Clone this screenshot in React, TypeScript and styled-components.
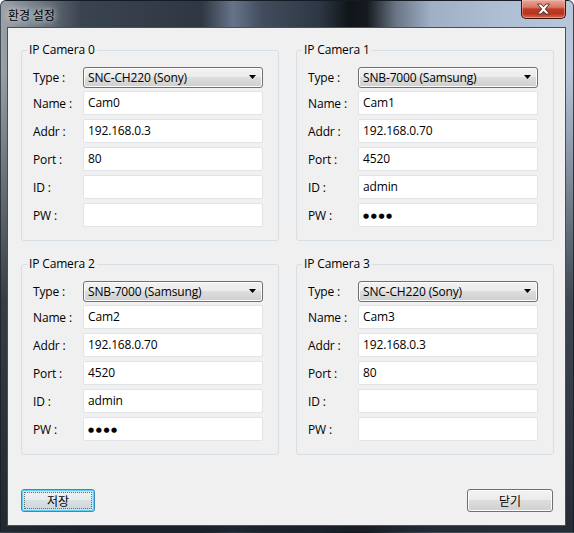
import React from 'react';
import styled, { createGlobalStyle, css } from 'styled-components';

const GlobalStyle = createGlobalStyle`
    html, body {
        margin: 0;
        padding: 0;
        background: #ffffff;
    }
    body {
        font-family: "Segoe UI", "Open Sans", "Noto Sans CJK KR", sans-serif;
        font-size: 12px;
        color: #000;
    }
`;

const WindowFrame = styled.div`
    box-sizing: border-box;
    width: 574px;
    height: 533px;
    display: flex;
    flex-direction: column;
    padding: 0 7px 6px 6px;
    border-radius: 6px 6px 0 0;
    border: 1px solid rgba(20, 26, 34, 0.7);
    background:
        linear-gradient(180deg, rgba(0, 0, 0, 0) 0px, rgba(0, 0, 0, 0) 70px, rgba(22, 28, 36, 0.75) 300px, rgba(24, 30, 38, 0.92) 533px),
        linear-gradient(90deg, #9aa2aa 0px, #737c86 35px, #3a4450 80px, #2e3742 200px, #66748a 232px, #414c5c 262px, #2e3744 318px, #11151a 348px, #161a20 366px, #6a7585 395px, #9fb0c6 430px, #aebfd4 500px, #b8c7da 574px);
`;

const TitleBar = styled.div`
    height: 26px;
    display: flex;
    justify-content: space-between;
    align-items: flex-start;
`;

const TitleText = styled.span`
    margin-top: 6px;
    margin-left: 1px;
    font-family: "Noto Sans CJK KR", sans-serif;
    font-size: 12px;
    line-height: 16px;
    color: #000;
    text-shadow: 0 0 6px rgba(255, 255, 255, 0.9), 0 0 10px rgba(255, 255, 255, 0.6);
`;

const CloseButton = styled.div`
    box-sizing: border-box;
    width: 45px;
    height: 19px;
    margin-top: -1px;
    display: flex;
    align-items: center;
    justify-content: center;
    border: 1px solid #3b1510;
    border-top: none;
    border-radius: 0 0 5px 5px;
    background: linear-gradient(180deg, #e6a797 0%, #d67a68 40%, #c33b25 50%, #b8321e 75%, #d46a4c 100%);
    box-shadow: inset 0 0 0 1px rgba(255, 200, 190, 0.45);
`;

const Client = styled.div`
    flex: 1;
    display: flex;
    flex-direction: column;
    background: #f0f0f0;
    border: 1px solid #46505c;
    padding: 14px 11px 13px 13px;
    letter-spacing: -0.15px;
`;

const GroupGrid = styled.div`
    display: grid;
    grid-template-columns: 258px 258px;
    column-gap: 17px;
    row-gap: 15px;
`;

const Group = styled.fieldset`
    box-sizing: border-box;
    margin: 0;
    min-width: 0;
    padding: 9px 15px 13px 11px;
    border: 1px solid #d5dfe5;
    border-radius: 3px;
`;

const Legend = styled.legend`
    margin-left: -6px;
    padding: 0 2px;
    font-size: 12px;
    line-height: 16px;
    color: #000;
`;

const Fields = styled.div`
    display: flex;
    flex-direction: column;
    gap: 4px;
`;

const Row = styled.div<{ $h: number }>`
    display: flex;
    align-items: center;
    height: ${p => p.$h}px;
`;

const Label = styled.span`
    width: 50px;
    flex: none;
    font-size: 12px;
    color: #000;
`;

const Combo = styled.div`
    box-sizing: border-box;
    flex: 1;
    height: 21px;
    display: flex;
    align-items: center;
    justify-content: space-between;
    padding: 0 6px 0 4px;
    border: 1px solid #707070;
    border-radius: 3px;
    background: linear-gradient(180deg, #f2f2f2 0%, #ebebeb 50%, #dddddd 50%, #cfcfcf 100%);
    box-shadow: inset 0 0 0 1px #fcfcfc;
    font-size: 12px;
    white-space: nowrap;
`;

const TextBox = styled.div<{ $secret?: boolean }>`
    box-sizing: border-box;
    flex: 1;
    height: 24px;
    padding: 3px 4px 0;
    border: 1px solid #e0e5ea;
    border-radius: 2px;
    background: #ffffff;
    font-size: 12px;
    line-height: 16px;
    white-space: nowrap;
    ${p => p.$secret && css`
        font-family: "DejaVu Sans", sans-serif;
        font-size: 7px;
        letter-spacing: 1.6px;
        padding-top: 4px;
    `}
`;

const Footer = styled.div`
    margin-top: auto;
    display: flex;
    justify-content: space-between;
    padding-right: 1px;
`;

const Button = styled.div<{ $w: number; $default?: boolean }>`
    box-sizing: border-box;
    width: ${p => p.$w}px;
    height: 23px;
    display: flex;
    align-items: center;
    justify-content: center;
    border: 1px solid #707070;
    border-radius: 3px;
    background: linear-gradient(180deg, #f2f2f2 0%, #ebebeb 50%, #dddddd 50%, #cfcfcf 100%);
    box-shadow: inset 0 0 0 1px #fcfcfc;
    font-family: "Noto Sans CJK KR", sans-serif;
    font-size: 12px;
    color: #000;
    ${p => p.$default && css`
        border-color: #2f8ec6;
        box-shadow: inset 0 0 0 1px #5ed0f6, inset 0 0 0 2px #bfe8f8;
        outline: 1px dotted #6a6a6a;
        outline-offset: -4px;
        background: linear-gradient(180deg, #eef2f4 0%, #e6ebee 50%, #d9e0e4 50%, #ccd5da 100%);
    `}
`;

function ComboArrow() {
    return (
        <svg width="7" height="4" viewBox="0 0 7 4">
            <path d="M0 0 H7 L3.5 4 Z" fill="#000" />
        </svg>
    );
}

function CloseGlyph() {
    return (
        <svg width="15" height="12" viewBox="0 0 15 12">
            <path
                d="M1.5 1 H5 L7.5 3.8 L10 1 H13.5 L9.3 6 L13.5 11 H10 L7.5 8.2 L5 11 H1.5 L5.7 6 Z"
                fill="#ffffff"
                stroke="#4a2a26"
                strokeWidth="0.9"
                strokeLinejoin="round"
            />
        </svg>
    );
}

interface Camera {
    type: string;
    name: string;
    addr: string;
    port: string;
    id: string;
    pw: string;
}

const cameras: Camera[] = [
    { type: 'SNC-CH220 (Sony)', name: 'Cam0', addr: '192.168.0.3', port: '80', id: '', pw: '' },
    { type: 'SNB-7000 (Samsung)', name: 'Cam1', addr: '192.168.0.70', port: '4520', id: 'admin', pw: '●●●●' },
    { type: 'SNB-7000 (Samsung)', name: 'Cam2', addr: '192.168.0.70', port: '4520', id: 'admin', pw: '●●●●' },
    { type: 'SNC-CH220 (Sony)', name: 'Cam3', addr: '192.168.0.3', port: '80', id: '', pw: '' },
];

function CameraGroup({ index, cam }: { index: number; cam: Camera }) {
    return (
        <Group>
            <Legend>IP Camera {index}</Legend>
            <Fields>
                <Row $h={20}>
                    <Label>Type :</Label>
                    <Combo>
                        <span>{cam.type}</span>
                        <ComboArrow />
                    </Combo>
                </Row>
                <Row $h={24}>
                    <Label>Name :</Label>
                    <TextBox>{cam.name}</TextBox>
                </Row>
                <Row $h={24}>
                    <Label>Addr :</Label>
                    <TextBox>{cam.addr}</TextBox>
                </Row>
                <Row $h={24}>
                    <Label>Port :</Label>
                    <TextBox>{cam.port}</TextBox>
                </Row>
                <Row $h={24}>
                    <Label>ID :</Label>
                    <TextBox>{cam.id}</TextBox>
                </Row>
                <Row $h={24}>
                    <Label>PW :</Label>
                    <TextBox $secret>{cam.pw}</TextBox>
                </Row>
            </Fields>
        </Group>
    );
}

function App() {
    return (
        <>
            <GlobalStyle />
            <WindowFrame>
                <TitleBar>
                    <TitleText>환경 설정</TitleText>
                    <CloseButton>
                        <CloseGlyph />
                    </CloseButton>
                </TitleBar>
                <Client>
                    <GroupGrid>
                        {cameras.map((cam, index) =>
                            <CameraGroup key={index} index={index} cam={cam} />
                        )}
                    </GroupGrid>
                    <Footer>
                        <Button $w={74} $default>저장</Button>
                        <Button $w={86}>닫기</Button>
                    </Footer>
                </Client>
            </WindowFrame>
        </>
    );
}

export default App;
